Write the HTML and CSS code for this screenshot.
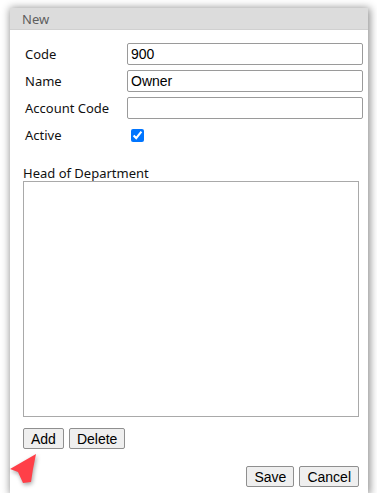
FILE: index.html
```html
<!DOCTYPE html>
<html>
<head>
<meta charset="utf-8">
<link rel="stylesheet" href="styles.css">
</head>
<body>
<div class="dialog">
  <div class="title">New</div>
  <div class="content">
    <div class="fields">
      <label class="lbl">Code</label>
      <input class="txt" type="text" value="900">
      <label class="lbl">Name</label>
      <input class="txt" type="text" value="Owner">
      <label class="lbl">Account Code</label>
      <input class="txt" type="text" value="">
      <label class="lbl">Active</label>
      <div class="chk-cell"><input class="chk" type="checkbox" checked></div>
    </div>
    <div class="list-label">Head of Department</div>
    <div class="listbox"></div>
    <div class="row-left">
      <button class="btn">Add</button>
      <button class="btn">Delete</button>
    </div>
    <div class="row-right">
      <button class="btn">Save</button>
      <button class="btn">Cancel</button>
    </div>
  </div>
  <svg class="pointer" width="32" height="34" viewBox="0 0 32 34">
    <polygon points="26,1 0,16 8,19 13,30 21,29 23,16" fill="#ff3f48"/>
  </svg>
</div>
</body>
</html>
```
FILE: styles.css
```css
html, body {
  margin: 0;
  padding: 0;
  background: #ffffff;
}
body {
  padding: 8px 9px 0 10px;
  font-family: "Noto Sans", "DejaVu Sans", sans-serif;
}
.dialog {
  position: relative;
  width: 358px;
  height: 485px;
  background: #ffffff;
  box-shadow: 1px 1px 8px 1px rgba(0, 0, 0, 0.45);
  display: flex;
  flex-direction: column;
}
.title {
  height: 22px;
  background: #dcdcdc;
  border-bottom: 1px solid #d0d0d0;
  box-sizing: border-box;
  padding-left: 12px;
  font-size: 13px;
  line-height: 22px;
  color: #5e5e5e;
}
.content {
  padding: 13px 9px 0 13px;
  display: flex;
  flex-direction: column;
}
.fields {
  display: grid;
  grid-template-columns: 104px 236px;
  grid-auto-rows: 22px;
  row-gap: 5px;
  align-items: center;
}
.lbl {
  padding-left: 2px;
  font-size: 13px;
  color: #111;
}
.txt {
  box-sizing: border-box;
  width: 236px;
  height: 22px;
  margin: 0;
  border: 1px solid #9a9a9a;
  border-radius: 2px;
  padding: 0 3px;
  font-family: "Liberation Sans", Arial, sans-serif;
  font-size: 14px;
  color: #000;
}
.chk-cell {
  display: flex;
  align-items: center;
  padding-left: 4px;
}
.chk {
  margin: 0;
  width: 13px;
  height: 13px;
  accent-color: #0075ff;
}
.list-label {
  margin-top: 19px;
  font-size: 13px;
  line-height: 16px;
  color: #111;
}
.listbox {
  width: 336px;
  height: 236px;
  box-sizing: border-box;
  border: 1px solid #a9a9a9;
}
.row-left {
  margin-top: 11px;
  display: flex;
  gap: 5px;
}
.row-right {
  margin-top: 17px;
  width: 336px;
  display: flex;
  justify-content: flex-end;
  gap: 5px;
}
.btn {
  height: 21px;
  box-sizing: border-box;
  margin: 0;
  padding: 0 7px;
  background: #efefef;
  border: 1px solid #8f8f8f;
  border-radius: 2px;
  font-family: "Liberation Sans", Arial, sans-serif;
  font-size: 14px;
  color: #000;
}
.pointer {
  position: absolute;
  left: 0;
  top: 445px;
  filter: drop-shadow(1px 2px 2px rgba(0, 0, 0, 0.35));
}
```
